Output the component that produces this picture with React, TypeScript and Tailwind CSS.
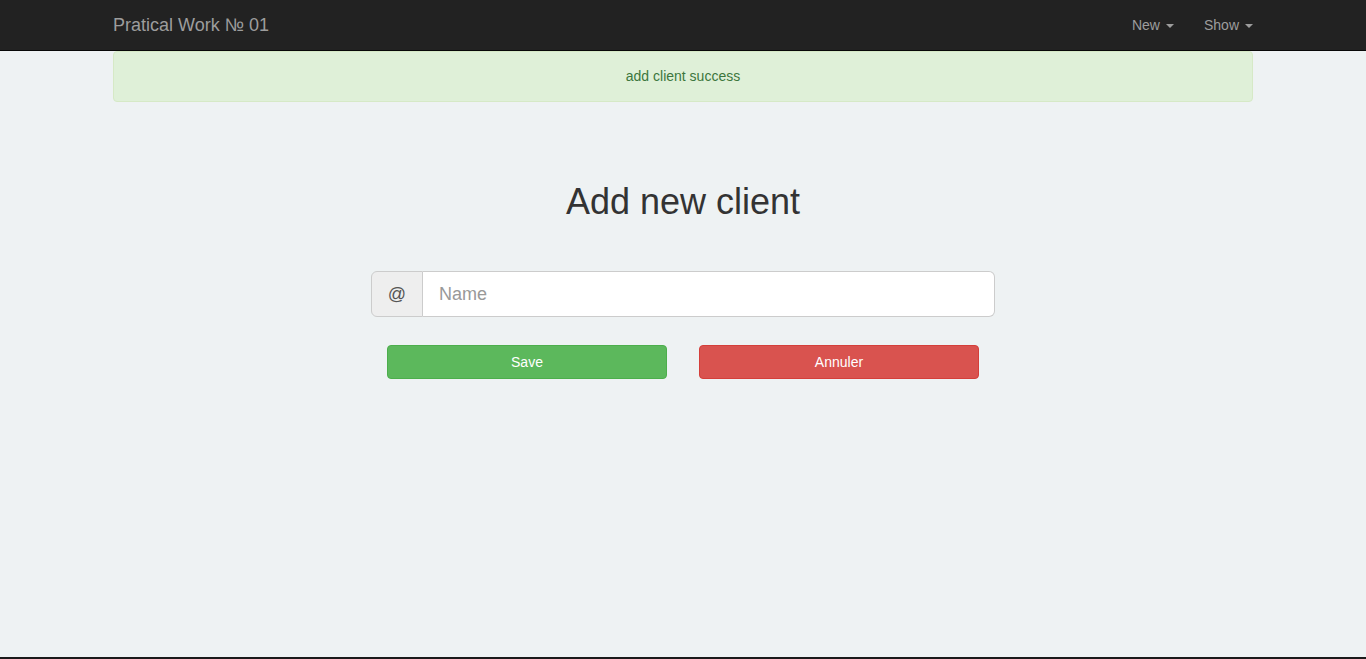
import * as React from 'react';

const font = { fontFamily: '"Liberation Sans", Arial, sans-serif' };

function Caret() {
  return (
    <span className="ml-[6px] inline-block h-0 w-0 border-x-[4px] border-t-[4px] border-x-transparent border-t-current align-middle" />
  );
}

export default function App() {
  const [name, setName] = React.useState('');

  return (
    <div
      className="flex min-h-screen flex-col bg-[#eef2f3] text-[14px] text-[#333]"
      style={font}
    >
      {/* Navbar */}
      <nav className="h-[51px] border-b border-[#080808] bg-[#222]">
        <div className="mx-auto flex h-[50px] w-[1170px] items-center justify-between px-[15px]">
          <a className="text-[18px] leading-[20px] text-[#9d9d9d]" href="#">
            Pratical Work № 01
          </a>
          <ul className="-mr-[15px] flex">
            <li>
              <a className="block px-[15px] py-[15px] leading-[20px] text-[#9d9d9d]" href="#">
                New
                <Caret />
              </a>
            </li>
            <li>
              <a className="block px-[15px] py-[15px] leading-[20px] text-[#9d9d9d]" href="#">
                Show
                <Caret />
              </a>
            </li>
          </ul>
        </div>
      </nav>

      <main className="flex-1">
        <div className="mx-auto w-[1170px] px-[15px]">
          {/* Alert */}
          <div className="flex h-[51px] items-center justify-center rounded-[4px] border border-[#d6e9c6] bg-[#dff0d8] text-[#3c763d]">
            add client success
          </div>

          <h1 className="mt-[80px] text-center text-[36px] leading-[40px] font-normal text-[#333]">
            Add new client
          </h1>

          {/* Input group */}
          <div className="mx-auto mt-[49px] flex h-[46px] w-[624px]">
            <span className="flex w-[52px] items-center justify-center rounded-l-[6px] border border-[#ccc] bg-[#eee] text-[18px] text-[#555]">
              @
            </span>
            <input
              className="flex-1 rounded-r-[6px] border border-l-0 border-[#ccc] bg-white px-[16px] text-[18px] text-[#555] outline-none placeholder:text-[#999]"
              placeholder="Name"
              value={name}
              onChange={(e) => setName(e.target.value)}
              style={font}
            />
          </div>

          {/* Buttons */}
          <div className="mx-auto mt-[28px] grid w-[624px] grid-cols-2">
            <div className="px-[16px]">
              <button
                className="h-[34px] w-full rounded-[4px] border border-[#4cae4c] bg-[#5cb85c] text-[14px] text-white"
                style={font}
              >
                Save
              </button>
            </div>
            <div className="px-[16px]">
              <button
                className="h-[34px] w-full rounded-[4px] border border-[#d43f3a] bg-[#d9534f] text-[14px] text-white"
                style={font}
              >
                Annuler
              </button>
            </div>
          </div>
        </div>
      </main>

      <div className="h-[2px] bg-[#1a1a1a]" />
    </div>
  );
}
